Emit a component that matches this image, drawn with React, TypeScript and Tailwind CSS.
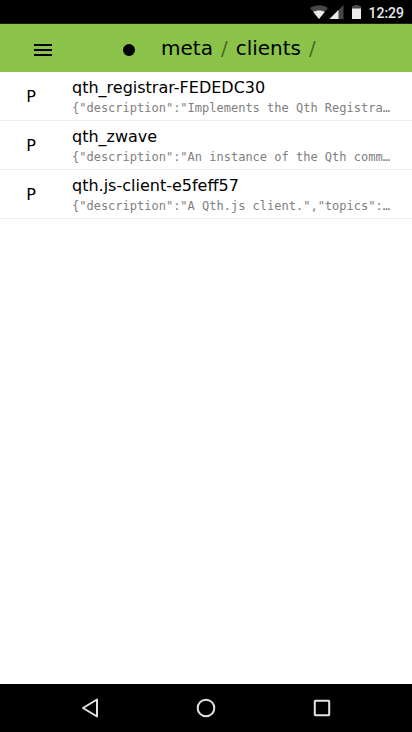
const rows = [
  { name: 'qth_registrar-FEDEDC30', value: '{"description":"Implements the Qth Registra…' },
  { name: 'qth_zwave', value: '{"description":"An instance of the Qth comm…' },
  { name: 'qth.js-client-e5feff57', value: '{"description":"A Qth.js client.","topics":…' },
];

export default function App() {
  return (
    <div className="flex h-[732px] w-[412px] flex-col overflow-hidden bg-white font-['DejaVu_Sans',sans-serif] text-black">
      <div className="flex h-6 shrink-0 items-center justify-end border-b border-[#202020] bg-black pr-2 text-[#e8e8e8]">
        <svg className="mt-px" width="58" height="24" viewBox="310 0 58 24">
          <path d="M310 8C315 4.2 323 4.2 328 8L319 19Z" fill="#474747" />
          <path d="M313.3 12C316.5 10 321.5 10 324.7 12L319 19Z" fill="#ebebeb" />
          <path d="M343.5 5V19H329.5Z" fill="#474747" />
          <path d="M338.5 10V19H329.5Z" fill="#ebebeb" />
          <path d="M354 6V5h5v1h2v3h-9V6Z" fill="#474747" />
          <path d="M352 8.5h9V19h-9Z" fill="#ebebeb" />
        </svg>
        <span className="pt-[3px] font-[Roboto,sans-serif] text-[14px] font-medium leading-6">12:29</span>
      </div>
      <header className="flex h-12 shrink-0 items-center bg-[#8bc34a] pl-[34px] text-[20px]">
        <svg className="mt-1" width="18" height="12" viewBox="0 0 18 12"><path d="M0 0h18v2H0zM0 5h18v2H0zM0 10h18v2H0z" /></svg>
        <span className="ml-[71px] mt-1 size-3 rounded-full bg-black" />
        <nav className="ml-[26px] flex whitespace-pre leading-6">
          <span>meta</span><span className="ml-2 text-black/50">/</span>
          <span className="ml-2">clients</span><span className="ml-2 text-black/50">/</span>
        </nav>
      </header>
      <main className="min-h-0 flex-1">
        {rows.map((r) => (
          <div key={r.name} className="flex h-[49px] items-center border-b border-[#eee]">
            <span className="w-[62px] pt-0.5 text-center text-[16px]">P</span>
            <div className="ml-[10px] w-80">
              <div className="whitespace-nowrap text-[16px] leading-6">{r.name}</div>
              <div className="whitespace-nowrap font-['DejaVu_Sans_Mono',monospace] text-[12px] leading-4 text-[#808080]">{r.value}</div>
            </div>
          </div>
        ))}
      </main>
      <footer className="h-12 shrink-0 bg-black">
        <svg width="412" height="48" viewBox="0 684 412 48" fill="none" stroke="#e3e3e3" strokeWidth="2">
          <path d="M97 699.5V716.5L83 708Z" strokeLinejoin="round" />
          <circle cx="206" cy="708" r="8.3" />
          <rect x="314.8" y="700.8" width="14.4" height="14.4" rx=".6" />
        </svg>
      </footer>
    </div>
  );
}
